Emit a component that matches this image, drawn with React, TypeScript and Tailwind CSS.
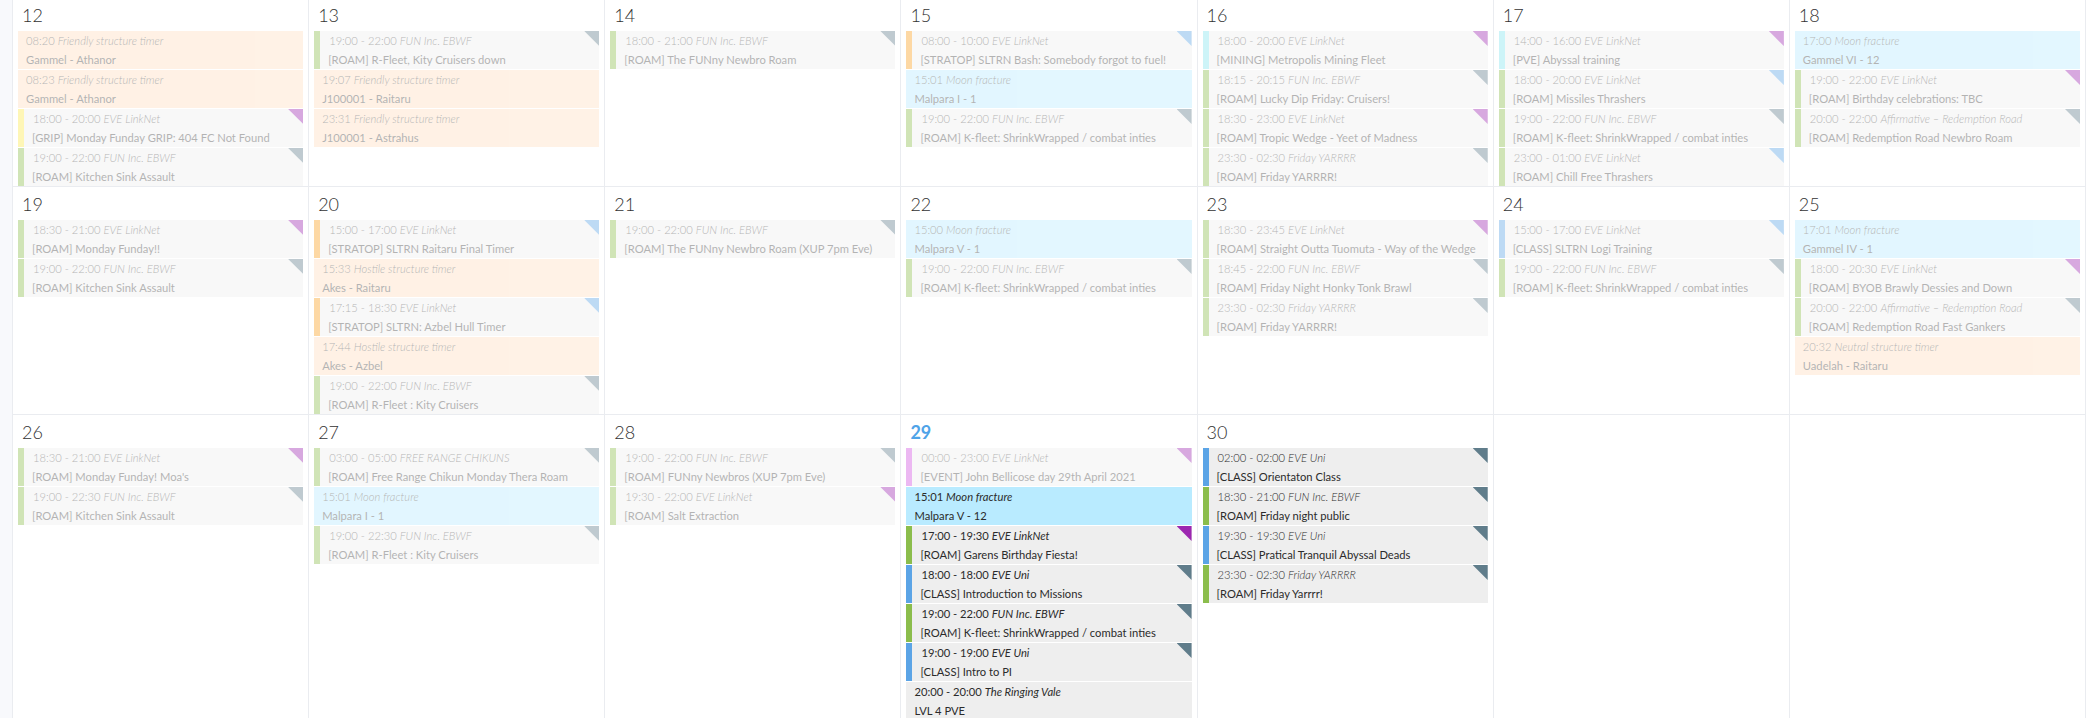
import React from "react";

type Strip = "green" | "blue" | "yellow" | "cyan" | "orange" | "pink";
type Tri = "purple" | "slate" | "blue";

type CalEvent = {
    time: string;
    title: string;
    desc: string;
    kind?: "timer" | "moon";
    strip?: Strip;
    tri?: Tri;
    faded?: boolean;
    strong?: boolean;
};

const stripClass: Record<Strip, string> = {
    green: "bg-[#8bbd4c]",
    blue: "bg-[#5ba4e6]",
    yellow: "bg-[#fde94a]",
    cyan: "bg-[#84e6ee]",
    orange: "bg-[#fb9f1e]",
    pink: "bg-[#d050e0]",
};

const triClass: Record<Tri, string> = {
    purple: "bg-[#9c27b0]",
    slate: "bg-[#607d8b]",
    blue: "bg-[#5ba4e6]",
};

const fun = "FUN Inc. EBWF";
const link = "EVE LinkNet";
const friendly = "Friendly structure timer";
const hostile = "Hostile structure timer";
const moon = "Moon fracture";
const kfleet = "[ROAM] K-fleet: ShrinkWrapped / combat inties";

const ev = (time: string, title: string, desc: string, strip: Strip, tri: Tri): CalEvent => ({
    time,
    title,
    desc,
    strip,
    tri,
    faded: true,
});

const timer = (time: string, title: string, desc: string): CalEvent => ({
    time,
    title,
    desc,
    kind: "timer",
    faded: true,
});

const frac = (time: string, desc: string): CalEvent => ({
    time,
    title: moon,
    desc,
    kind: "moon",
    faded: true,
});

const days: { day: number | null; today?: boolean; events: CalEvent[] }[] = [
    {
        day: 12,
        events: [
            timer("08:20", friendly, "Gammel - Athanor"),
            timer("08:23", friendly, "Gammel - Athanor"),
            ev("18:00 - 20:00", link, "[GRIP] Monday Funday GRIP: 404 FC Not Found", "yellow", "purple"),
            ev("19:00 - 22:00", fun, "[ROAM] Kitchen Sink Assault", "green", "slate"),
        ],
    },
    {
        day: 13,
        events: [
            ev("19:00 - 22:00", fun, "[ROAM] R-Fleet, Kity Cruisers down", "green", "slate"),
            timer("19:07", friendly, "J100001 - Raitaru"),
            timer("23:31", friendly, "J100001 - Astrahus"),
        ],
    },
    {
        day: 14,
        events: [ev("18:00 - 21:00", fun, "[ROAM] The FUNny Newbro Roam", "green", "slate")],
    },
    {
        day: 15,
        events: [
            ev("08:00 - 10:00", link, "[STRATOP] SLTRN Bash: Somebody forgot to fuel!", "orange", "blue"),
            frac("15:01", "Malpara I - 1"),
            ev("19:00 - 22:00", fun, kfleet, "green", "slate"),
        ],
    },
    {
        day: 16,
        events: [
            ev("18:00 - 20:00", link, "[MINING] Metropolis Mining Fleet", "cyan", "purple"),
            ev("18:15 - 20:15", fun, "[ROAM] Lucky Dip Friday: Cruisers!", "green", "slate"),
            ev("18:30 - 23:00", link, "[ROAM] Tropic Wedge - Yeet of Madness", "green", "purple"),
            ev("23:30 - 02:30", "Friday YARRRR", "[ROAM] Friday YARRRR!", "green", "slate"),
        ],
    },
    {
        day: 17,
        events: [
            ev("14:00 - 16:00", link, "[PVE] Abyssal training", "cyan", "purple"),
            ev("18:00 - 20:00", link, "[ROAM] Missiles Thrashers", "green", "blue"),
            ev("19:00 - 22:00", fun, kfleet, "green", "slate"),
            ev("23:00 - 01:00", link, "[ROAM] Chill Free Thrashers", "green", "blue"),
        ],
    },
    {
        day: 18,
        events: [
            frac("17:00", "Gammel VI - 12"),
            ev("19:00 - 22:00", link, "[ROAM] Birthday celebrations: TBC", "green", "purple"),
            ev("20:00 - 22:00", "Affirmative – Redemption Road", "[ROAM] Redemption Road Newbro Roam", "green", "slate"),
        ],
    },
    {
        day: 19,
        events: [
            ev("18:30 - 21:00", link, "[ROAM] Monday Funday!!", "green", "purple"),
            ev("19:00 - 22:00", fun, "[ROAM] Kitchen Sink Assault", "green", "slate"),
        ],
    },
    {
        day: 20,
        events: [
            ev("15:00 - 17:00", link, "[STRATOP] SLTRN Raitaru Final Timer", "orange", "blue"),
            timer("15:33", hostile, "Akes - Raitaru"),
            ev("17:15 - 18:30", link, "[STRATOP] SLTRN: Azbel Hull Timer", "orange", "blue"),
            timer("17:44", hostile, "Akes - Azbel"),
            ev("19:00 - 22:00", fun, "[ROAM] R-Fleet : Kity Cruisers", "green", "slate"),
        ],
    },
    {
        day: 21,
        events: [ev("19:00 - 22:00", fun, "[ROAM] The FUNny Newbro Roam (XUP 7pm Eve)", "green", "slate")],
    },
    {
        day: 22,
        events: [frac("15:00", "Malpara V - 1"), ev("19:00 - 22:00", fun, kfleet, "green", "slate")],
    },
    {
        day: 23,
        events: [
            ev("18:30 - 23:45", link, "[ROAM] Straight Outta Tuomuta - Way of the Wedge", "green", "purple"),
            ev("18:45 - 22:00", fun, "[ROAM] Friday Night Honky Tonk Brawl", "green", "slate"),
            ev("23:30 - 02:30", "Friday YARRRR", "[ROAM] Friday YARRRR!", "green", "slate"),
        ],
    },
    {
        day: 24,
        events: [
            ev("15:00 - 17:00", link, "[CLASS] SLTRN Logi Training", "blue", "blue"),
            ev("19:00 - 22:00", fun, kfleet, "green", "slate"),
        ],
    },
    {
        day: 25,
        events: [
            frac("17:01", "Gammel IV - 1"),
            ev("18:00 - 20:30", link, "[ROAM] BYOB Brawly Dessies and Down", "green", "purple"),
            ev("20:00 - 22:00", "Affirmative – Redemption Road", "[ROAM] Redemption Road Fast Gankers", "green", "slate"),
            timer("20:32", "Neutral structure timer", "Uadelah - Raitaru"),
        ],
    },
    {
        day: 26,
        events: [
            ev("18:30 - 21:00", link, "[ROAM] Monday Funday! Moa's", "green", "purple"),
            ev("19:00 - 22:30", fun, "[ROAM] Kitchen Sink Assault", "green", "slate"),
        ],
    },
    {
        day: 27,
        events: [
            ev("03:00 - 05:00", "FREE RANGE CHIKUNS", "[ROAM] Free Range Chikun Monday Thera Roam", "green", "slate"),
            frac("15:01", "Malpara I - 1"),
            ev("19:00 - 22:30", fun, "[ROAM] R-Fleet : Kity Cruisers", "green", "slate"),
        ],
    },
    {
        day: 28,
        events: [
            ev("19:00 - 22:00", fun, "[ROAM] FUNny Newbros (XUP 7pm Eve)", "green", "slate"),
            ev("19:30 - 22:00", link, "[ROAM] Salt Extraction", "green", "purple"),
        ],
    },
    {
        day: 29,
        today: true,
        events: [
            ev("00:00 - 23:00", link, "[EVENT] John Bellicose day 29th April 2021", "pink", "purple"),
            { time: "15:01", title: moon, desc: "Malpara V - 12", kind: "moon", strong: true },
            { time: "17:00 - 19:30", title: link, desc: "[ROAM] Garens Birthday Fiesta!", strip: "green", tri: "purple", strong: true },
            { time: "18:00 - 18:00", title: "EVE Uni", desc: "[CLASS] Introduction to Missions", strip: "blue", tri: "slate", strong: true },
            { time: "19:00 - 22:00", title: fun, desc: kfleet, strip: "green", tri: "slate", strong: true },
            { time: "19:00 - 19:00", title: "EVE Uni", desc: "[CLASS] Intro to PI", strip: "blue", tri: "slate", strong: true },
            { time: "20:00 - 20:00", title: "The Ringing Vale", desc: "LVL 4 PVE", strong: true },
        ],
    },
    {
        day: 30,
        events: [
            { time: "02:00 - 02:00", title: "EVE Uni", desc: "[CLASS] Orientaton Class", strip: "blue", tri: "slate" },
            { time: "18:30 - 21:00", title: fun, desc: "[ROAM] Friday night public", strip: "green", tri: "slate" },
            { time: "19:30 - 19:30", title: "EVE Uni", desc: "[CLASS] Pratical Tranquil Abyssal Deads", strip: "blue", tri: "slate" },
            { time: "23:30 - 02:30", title: "Friday YARRRR", desc: "[ROAM] Friday Yarrrr!", strip: "green", tri: "slate" },
        ],
    },
    { day: null, events: [] },
    { day: null, events: [] },
];

const EventRow = ({ event }: { event: CalEvent }): React.JSX.Element => {
    const bg =
        event.kind === "timer" ? "bg-[#ffdec0]" : event.kind === "moon" ? "bg-[#b9ebff]" : "bg-[#eeeeee]";

    return (
        <div className={`relative flex h-[38px] mb-px last:mb-0 overflow-hidden ${bg} ${event.faded ? "opacity-40" : ""}`}>
            {event.strip && <div className={`w-[6px] shrink-0 ${stripClass[event.strip]}`} />}
            <div
                className={`min-w-0 flex-1 pl-2 text-[11.2px] leading-[19px] whitespace-nowrap ${
                    event.faded ? "text-[#444444]" : "text-[#2b2b2b]"
                }`}
            >
                <div className={`${event.strong ? "font-normal" : "font-light"} ${event.strip ? "pl-px" : ""}`}>
                    {event.time} <em>{event.title}</em>
                </div>
                <div>{event.desc}</div>
            </div>
            {event.tri && (
                <div
                    className={`absolute top-0 right-0 w-[15px] h-[15px] [clip-path:polygon(0_0,100%_0,100%_100%)] ${triClass[event.tri]}`}
                />
            )}
        </div>
    );
};

export default function App(): React.JSX.Element {
    return (
        <div className="h-[718px] overflow-hidden bg-[#f8f9fc] pl-3 [font-family:Lato,sans-serif]">
            <div className="grid grid-cols-7 -mt-[2px] bg-white border-r border-[#eaecf0]">
                {days.map((d, i) => (
                    <div key={i} className="border-l border-b border-[#eaecf0] px-[5px] min-h-[300px] [&:nth-child(-n+14)]:min-h-0">
                        <div
                            className={`h-[33px] pl-[4px] pt-[5px] text-[18px] leading-[24px] ${
                                d.today ? "font-bold text-[#4fa3e8]" : "font-light text-[#333333]"
                            }`}
                        >
                            {d.day}
                        </div>
                        {d.events.map((event, j) => (
                            <EventRow key={j} event={event} />
                        ))}
                    </div>
                ))}
            </div>
        </div>
    );
}
